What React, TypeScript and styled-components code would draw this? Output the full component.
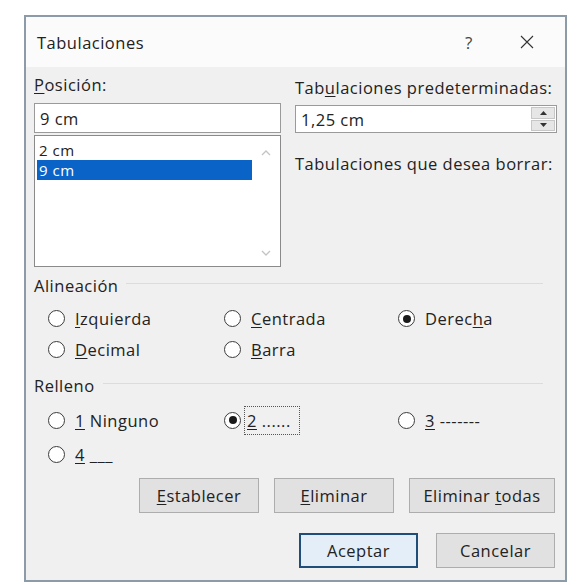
import React from "react";
import styled, { createGlobalStyle } from "styled-components";

const GlobalStyle = createGlobalStyle`
  html, body {
    margin: 0;
    padding: 0;
    background: #ffffff;
  }
  body {
    font-family: "Open Sans", "Noto Sans", "Liberation Sans", sans-serif;
    font-size: 16.5px;
    letter-spacing: 0.5px;
    color: #222;
  }
`;

const Page = styled.div`
  padding: 15px 0 0 24px;
`;

const Dialog = styled.div`
  width: 543px;
  height: 567px;
  box-sizing: border-box;
  border: 2px solid #8d9aa8;
  background: #f0f0f0;
  display: flex;
  flex-direction: column;
`;

const TitleBar = styled.div`
  height: 50px;
  background: #fbfbfb;
  display: flex;
  align-items: center;
  padding: 0 0 0 11px;
`;

const Title = styled.span`
  flex: 1;
`;

const TitleButton = styled.span<{ $w: number }>`
  width: ${(p) => p.$w}px;
  display: flex;
  justify-content: center;
  align-items: center;
  color: #444;
  font-size: 17px;
`;

const Body = styled.div`
  flex: 1;
  padding: 8px 10px 0 8px;
  display: flex;
  flex-direction: column;
`;

const TopGrid = styled.div`
  display: grid;
  grid-template-columns: 247px 262px;
  column-gap: 14px;
`;

const Column = styled.div`
  display: flex;
  flex-direction: column;
`;

const Label = styled.div<{ $top?: number }>`
  height: 20px;
  line-height: 20px;
  margin-top: ${(p) => p.$top ?? 0}px;
  white-space: nowrap;
`;

const Key = styled.span`
  text-decoration: underline;
  text-underline-offset: 2px;
`;

const TextBox = styled.div<{ $top: number; $h: number }>`
  margin-top: ${(p) => p.$top}px;
  height: ${(p) => p.$h}px;
  box-sizing: border-box;
  border: 1px solid #9a9a9a;
  background: #fff;
  display: flex;
  align-items: center;
  padding-left: 5px;
  position: relative;
`;

const SpinBox = styled.div`
  position: absolute;
  right: 1px;
  top: 1px;
  bottom: 1px;
  width: 24px;
  display: flex;
  flex-direction: column;
  gap: 1px;
`;

const SpinButton = styled.div`
  flex: 1;
  background: #e6e6e6;
  border: 1px solid #c7c7c7;
  display: flex;
  align-items: center;
  justify-content: center;
`;

const ListBox = styled.div`
  margin-top: 2px;
  height: 132px;
  box-sizing: border-box;
  border: 1px solid #8a8a8a;
  background: #fff;
  display: flex;
`;

const ListItems = styled.div`
  flex: 1;
  padding: 4px 0 0 2px;
  font-size: 15px;
`;

const ListItem = styled.div<{ $selected?: boolean }>`
  height: 20px;
  line-height: 20px;
  padding-left: 2px;
  background: ${(p) => (p.$selected ? "#0a64c8" : "transparent")};
  color: ${(p) => (p.$selected ? "#fff" : "#222")};
`;

const ScrollBar = styled.div`
  width: 28px;
  display: flex;
  flex-direction: column;
  justify-content: space-between;
  align-items: center;
  padding: 14px 0 10px;
`;

const GroupHeader = styled.div<{ $top: number }>`
  margin-top: ${(p) => p.$top}px;
  height: 20px;
  display: flex;
  align-items: center;
  gap: 8px;
  padding-right: 12px;

  &::after {
    content: "";
    flex: 1;
    height: 1px;
    background: #dcdcdc;
    margin-top: -3px;
  }
`;

const RadioGrid = styled.div<{ $row: number }>`
  display: grid;
  grid-template-columns: 176px 174px 1fr;
  grid-auto-rows: ${(p) => p.$row}px;
  padding: 8px 0 0 14px;
`;

const RadioOption = styled.label`
  display: flex;
  align-items: center;
  gap: 10px;
  white-space: nowrap;
`;

const RadioCircle = styled.span<{ $checked?: boolean }>`
  width: 17px;
  height: 17px;
  box-sizing: border-box;
  border-radius: 50%;
  border: 1.5px solid #3c3c3c;
  background: #fff;
  display: flex;
  align-items: center;
  justify-content: center;

  &::after {
    content: "";
    width: 8px;
    height: 8px;
    border-radius: 50%;
    background: ${(p) => (p.$checked ? "#1a1a1a" : "transparent")};
  }
`;

const FocusText = styled.span`
  outline: 1px dotted #555;
  outline-offset: 2px;
  padding-right: 6px;
  margin-left: -4px;
`;

const ButtonRow = styled.div<{ $top: number; $gap: number }>`
  margin-top: ${(p) => p.$top}px;
  display: flex;
  justify-content: flex-end;
  gap: ${(p) => p.$gap}px;
`;

const Button = styled.button<{ $w: number; $primary?: boolean }>`
  width: ${(p) => p.$w}px;
  height: 35px;
  font: inherit;
  letter-spacing: inherit;
  color: #222;
  background: ${(p) => (p.$primary ? "#e3eef8" : "#e1e1e1")};
  border: ${(p) => (p.$primary ? "2px solid #1f4e78" : "1px solid #adadad")};
  padding: 0;
`;

const CloseIcon = () => (
  <svg width="14" height="14" viewBox="0 0 14 14">
    <path d="M1 1 L13 13 M13 1 L1 13" stroke="#333" strokeWidth="1.1" />
  </svg>
);

const Chevron = ({ up }: { up?: boolean }) => (
  <svg width="10" height="6" viewBox="0 0 10 6">
    <path
      d={up ? "M1 5 L5 1 L9 5" : "M1 1 L5 5 L9 1"}
      fill="none"
      stroke="#c4c4c4"
      strokeWidth="1.3"
    />
  </svg>
);

const Triangle = ({ up }: { up?: boolean }) => (
  <svg width="7" height="4" viewBox="0 0 7 4">
    <path d={up ? "M0 4 L3.5 0 L7 4 Z" : "M0 0 L3.5 4 L7 0 Z"} fill="#333" />
  </svg>
);

const Radio = ({
  checked,
  children,
}: {
  checked?: boolean;
  children: React.ReactNode;
}) => (
  <RadioOption>
    <RadioCircle $checked={checked} />
    <span>{children}</span>
  </RadioOption>
);

export default function App() {
  return (
    <>
      <GlobalStyle />
      <Page>
        <Dialog>
          <TitleBar>
            <Title>Tabulaciones</Title>
            <TitleButton $w={40}>?</TitleButton>
            <TitleButton $w={76}>
              <CloseIcon />
            </TitleButton>
          </TitleBar>
          <Body>
            <TopGrid>
              <Column>
                <Label>
                  <Key>P</Key>osición:
                </Label>
                <TextBox $top={8} $h={30}>
                  9 cm
                </TextBox>
                <ListBox>
                  <ListItems>
                    <ListItem>2 cm</ListItem>
                    <ListItem $selected>9 cm</ListItem>
                  </ListItems>
                  <ScrollBar>
                    <Chevron up />
                    <Chevron />
                  </ScrollBar>
                </ListBox>
              </Column>
              <Column>
                <Label $top={3}>
                  Tab<Key>u</Key>laciones predeterminadas:
                </Label>
                <TextBox $top={7} $h={28}>
                  1,25 cm
                  <SpinBox>
                    <SpinButton>
                      <Triangle up />
                    </SpinButton>
                    <SpinButton>
                      <Triangle />
                    </SpinButton>
                  </SpinBox>
                </TextBox>
                <Label $top={21}>Tabulaciones que desea borrar:</Label>
              </Column>
            </TopGrid>

            <GroupHeader $top={8}>Alineación</GroupHeader>
            <RadioGrid $row={31}>
              <Radio>
                <Key>I</Key>zquierda
              </Radio>
              <Radio>
                <Key>C</Key>entrada
              </Radio>
              <Radio checked>
                Derec<Key>h</Key>a
              </Radio>
              <Radio>
                <Key>D</Key>ecimal
              </Radio>
              <Radio>
                <Key>B</Key>arra
              </Radio>
            </RadioGrid>

            <GroupHeader $top={10}>Relleno</GroupHeader>
            <RadioGrid $row={34}>
              <Radio>
                <Key>1</Key> Ninguno
              </Radio>
              <Radio checked>
                <FocusText>
                  <Key>2</Key> ......
                </FocusText>
              </Radio>
              <Radio>
                <Key>3</Key> -------
              </Radio>
              <Radio>
                <Key>4</Key> ___
              </Radio>
            </RadioGrid>

            <ButtonRow $top={7} $gap={15}>
              <Button $w={120}>
                <Key>E</Key>stablecer
              </Button>
              <Button $w={120}>
                <Key>E</Key>liminar
              </Button>
              <Button $w={146}>
                Eliminar <Key>t</Key>odas
              </Button>
            </ButtonRow>
            <ButtonRow $top={20} $gap={18}>
              <Button $w={119} $primary>
                Aceptar
              </Button>
              <Button $w={119}>Cancelar</Button>
            </ButtonRow>
          </Body>
        </Dialog>
      </Page>
    </>
  );
}
